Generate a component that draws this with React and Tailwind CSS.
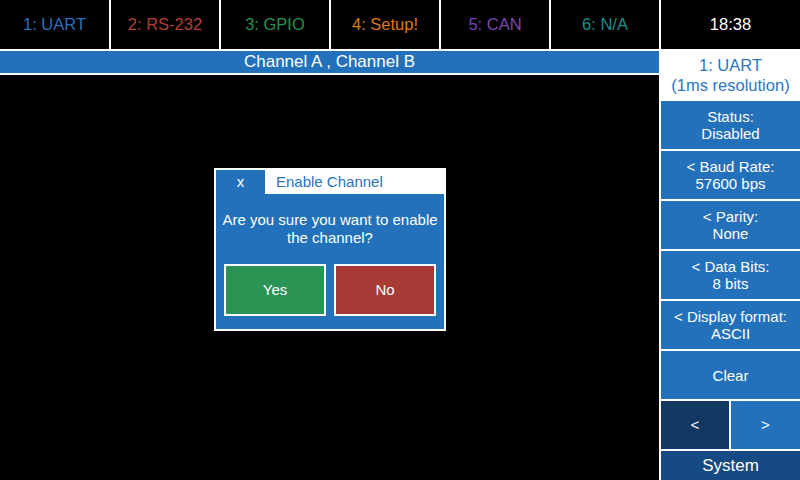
import React from "react";

const tabs = [
  { label: "1: UART", color: "text-[#2d70b9]", w: "w-[109px]" },
  { label: "2: RS-232", color: "text-[#b43d37]", w: "w-[108px]" },
  { label: "3: GPIO", color: "text-[#2a9150]", w: "w-[108px]" },
  { label: "4: Setup!", color: "text-[#df7a10]", w: "w-[108px]" },
  { label: "5: CAN", color: "text-[#7c46b3]", w: "w-[108px]" },
  { label: "6: N/A", color: "text-[#14908d]", w: "w-[108px]" },
];

function SideButton({ top, bottom }) {
  return (
    <div className="h-[48px] bg-[#2271ba] text-white text-[15px] leading-[17px] flex flex-col items-center justify-center text-center">
      <div>{top}</div>
      {bottom && <div>{bottom}</div>}
    </div>
  );
}

export default function App() {
  return (
    <div className="w-[800px] h-[480px] bg-white flex flex-col gap-[2px] overflow-hidden font-['Liberation_Sans',Arial,sans-serif]">
      {/* Top tab bar */}
      <div className="h-[49px] flex gap-[2px] shrink-0">
        {tabs.map((t) => (
          <div
            key={t.label}
            className={`${t.w} bg-black flex items-center justify-center text-[16.5px] ${t.color}`}
          >
            {t.label}
          </div>
        ))}
        <div className="flex-1 bg-black flex items-center justify-center text-[16.5px] text-white">
          18:38
        </div>
      </div>

      {/* Body */}
      <div className="flex-1 flex gap-[2px] min-h-0">
        {/* Left area */}
        <div className="w-[659px] flex flex-col gap-[2px] relative">
          <div className="h-[22px] bg-[#2271ba] text-white text-[17px] flex items-center justify-center">
            Channel A , Channel B
          </div>
          <div className="flex-1 bg-black" />

          {/* Dialog */}
          <div className="absolute left-[214px] top-[117px] w-[232px] h-[163px] border-2 border-white bg-[#2271ba] flex flex-col">
            <div className="h-[24px] flex">
              <div className="w-[49px] flex items-center justify-center text-white text-[15px]">
                x
              </div>
              <div className="flex-1 bg-white flex items-center pl-[11px] text-[15px] text-[#2a72bc]">
                Enable Channel
              </div>
            </div>
            <div className="mt-[17px] text-white text-[15px] leading-[17.5px] text-center">
              <div>Are you sure you want to enable</div>
              <div>the channel?</div>
            </div>
            <div className="mt-[18px] px-[8px] flex gap-[8px]">
              <div className="flex-1 h-[52px] border-2 border-white bg-[#2a9454] text-white text-[15px] flex items-center justify-center">
                Yes
              </div>
              <div className="flex-1 h-[52px] border-2 border-white bg-[#a83a36] text-white text-[15px] flex items-center justify-center">
                No
              </div>
            </div>
          </div>
        </div>

        {/* Right panel */}
        <div className="flex-1 flex flex-col gap-[2px]">
          <div className="h-[48px] bg-white text-[#2a76c2] text-[16.5px] leading-[20px] flex flex-col items-center justify-center text-center">
            <div>1: UART</div>
            <div>(1ms resolution)</div>
          </div>
          <SideButton top="Status:" bottom="Disabled" />
          <SideButton top="< Baud Rate:" bottom="57600 bps" />
          <SideButton top="< Parity:" bottom="None" />
          <SideButton top="< Data Bits:" bottom="8 bits" />
          <SideButton top="< Display format:" bottom="ASCII" />
          <SideButton top="Clear" />
          <div className="h-[48px] flex gap-[2px]">
            <div className="w-[68px] bg-[#113861] text-white text-[15px] flex items-center justify-center">
              &lt;
            </div>
            <div className="flex-1 bg-[#2271ba] text-white text-[15px] flex items-center justify-center">
              &gt;
            </div>
          </div>
          <div className="flex-1 bg-[#154b82] text-white text-[17px] flex items-center justify-center">
            System
          </div>
        </div>
      </div>
    </div>
  );
}
